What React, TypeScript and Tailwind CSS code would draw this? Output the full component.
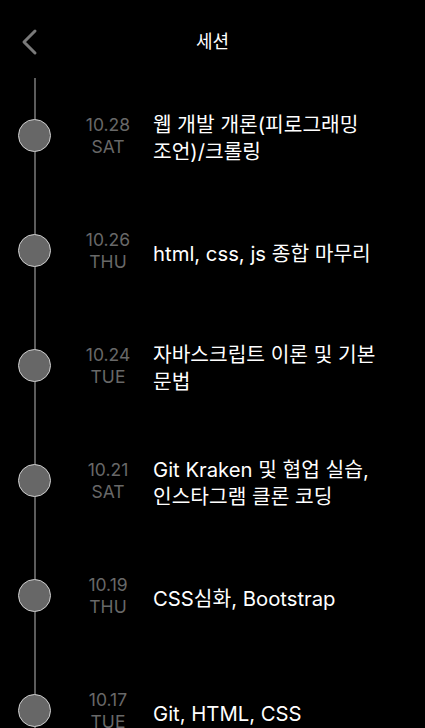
import React from "react";

type Session = {
  date: string;
  day: string;
  title: string;
};

const sessions: Session[] = [
  { date: "10.28", day: "SAT", title: "웹 개발 개론(피로그래밍 조언)/크롤링" },
  { date: "10.26", day: "THU", title: "html, css, js 종합 마무리" },
  { date: "10.24", day: "TUE", title: "자바스크립트 이론 및 기본 문법" },
  { date: "10.21", day: "SAT", title: "Git Kraken 및 협업 실습, 인스타그램 클론 코딩" },
  { date: "10.19", day: "THU", title: "CSS심화, Bootstrap" },
  { date: "10.17", day: "TUE", title: "Git, HTML, CSS" },
];

const font = {
  fontFamily: '"Inter", "Noto Sans CJK KR", sans-serif',
};

const SessionRow = ({ session }: { session: Session }) => {
  return (
    <li className="flex h-[115px] items-center">
      <div className="relative z-10 ml-[18px] h-[33px] w-[33px] shrink-0 rounded-full border border-[#cfcfcf] bg-[#676767]" />
      <div className="ml-[32px] flex w-[50px] shrink-0 flex-col items-center text-[17.5px] leading-[22px] text-[#686868]">
        <span>{session.date}</span>
        <span>{session.day}</span>
      </div>
      <p className="ml-[20px] mt-[5px] w-[250px] break-keep text-[20.3px] leading-[27px] text-white">
        {session.title}
      </p>
    </li>
  );
};

export default function App() {
  return (
    <div
      className="relative h-[728px] w-[425px] overflow-hidden bg-black"
      style={font}
    >
      <header className="relative flex h-[78px] items-start justify-center pt-[29px]">
        <button className="absolute left-[20px] top-[28px] p-0">
          <svg width="20" height="28" viewBox="0 0 20 28" fill="none">
            <path
              d="M15 3 L4 14 L15 25"
              stroke="#7a7a7a"
              strokeWidth="3"
              strokeLinecap="round"
              strokeLinejoin="round"
            />
          </svg>
        </button>
        <h1 className="text-[18px] leading-[26px] text-white">세션</h1>
      </header>
      <div className="relative">
        <div className="absolute bottom-0 left-[34px] top-0 w-[2px] bg-[#5c5c5c]" />
        <ul className="relative">
          {sessions.map((s) => (
            <SessionRow key={s.date} session={s} />
          ))}
        </ul>
      </div>
    </div>
  );
}
